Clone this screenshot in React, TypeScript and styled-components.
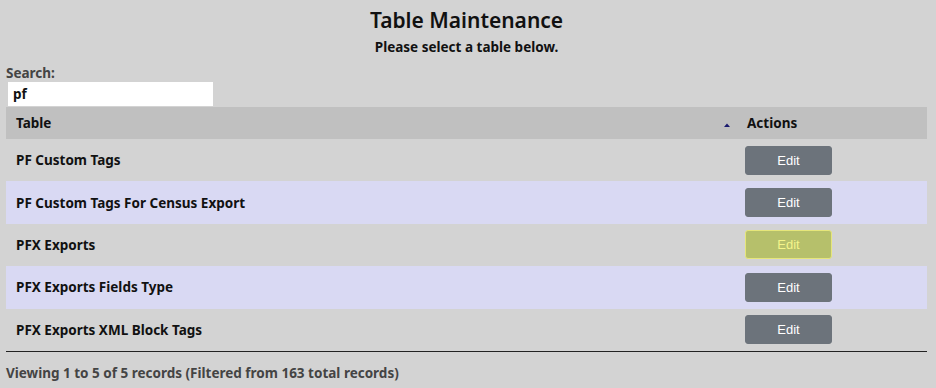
import React from "react";
import styled, { createGlobalStyle } from "styled-components";

const GlobalStyle = createGlobalStyle`
  body {
    margin: 0;
    background: #d3d3d3;
    font-family: "Noto Sans", "Open Sans", sans-serif;
    color: #111;
  }
`;

const Page = styled.div`
  padding: 6px 9px 0 6px;
`;

const Title = styled.h1`
  margin: 0;
  text-align: center;
  font-size: 21px;
  font-weight: 600;
  line-height: 28px;
`;

const Subtitle = styled.div`
  text-align: center;
  font-size: 13.5px;
  font-weight: 700;
  line-height: 16px;
  margin-top: 5px;
`;

const SearchLabel = styled.div`
  font-size: 13.5px;
  font-weight: 700;
  color: #444;
  margin-top: 9px;
  line-height: 18px;
`;

const SearchInput = styled.input`
  display: block;
  box-sizing: border-box;
  margin: 0 0 1px 2px;
  width: 205px;
  height: 24px;
  border: none;
  outline: none;
  background: #fff;
  padding: 0 5px;
  font-family: "Noto Sans", sans-serif;
  font-size: 13.5px;
  font-weight: 700;
  color: #111;
`;

const Table = styled.table`
  width: 100%;
  border-collapse: collapse;
  border-bottom: 1px solid #222;
`;

const HeadCell = styled.th<{ $w?: string }>`
  background: #c0c0c0;
  height: 32px;
  padding: 0 10px;
  text-align: left;
  font-size: 13.5px;
  font-weight: 700;
  width: ${(p) => p.$w || "auto"};
`;

const SortCell = styled(HeadCell)`
  width: 10px;
  padding: 0 6px 0 0;
  text-align: right;
`;

const Row = styled.tr<{ $alt?: boolean }>`
  background: ${(p) => (p.$alt ? "#d9d9f3" : "transparent")};
`;

const NameCell = styled.td`
  height: 42.4px;
  padding: 0 10px;
  font-size: 13.5px;
  font-weight: 700;
`;

const ActionCell = styled.td`
  padding: 0 8px;
`;

const EditButton = styled.button<{ $hover?: boolean }>`
  box-sizing: border-box;
  width: 87px;
  height: 29px;
  border-radius: 3px;
  border: 1px solid ${(p) => (p.$hover ? "#e6e67a" : "#6c737b")};
  background: ${(p) => (p.$hover ? "#b6c06b" : "#6c737b")};
  color: ${(p) => (p.$hover ? "#f4f48a" : "#fff")};
  font-family: "Liberation Sans", Arial, sans-serif;
  font-size: 13px;
  cursor: pointer;
`;

const Footer = styled.div`
  font-size: 13.5px;
  font-weight: 700;
  color: #444;
  margin-top: 12px;
`;

const rows = [
  "PF Custom Tags",
  "PF Custom Tags For Census Export",
  "PFX Exports",
  "PFX Exports Fields Type",
  "PFX Exports XML Block Tags",
];

const SortArrow = () => (
  <svg width="8" height="6" viewBox="0 0 8 6">
    <path d="M1 5 L4 1.5 L7 5 Z" fill="#1a1a6e" />
  </svg>
);

export default function App() {
  return (
    <Page>
      <GlobalStyle />
      <Title>Table Maintenance</Title>
      <Subtitle>Please select a table below.</Subtitle>
      <SearchLabel>Search:</SearchLabel>
      <SearchInput defaultValue="pf" />
      <Table>
        <thead>
          <tr>
            <HeadCell>Table</HeadCell>
            <SortCell>
              <SortArrow />
            </SortCell>
            <HeadCell $w="170px">Actions</HeadCell>
          </tr>
        </thead>
        <tbody>
          {rows.map((name, i) => (
            <Row key={name} $alt={i % 2 === 1}>
              <NameCell colSpan={2}>{name}</NameCell>
              <ActionCell>
                <EditButton $hover={i === 2}>Edit</EditButton>
              </ActionCell>
            </Row>
          ))}
        </tbody>
      </Table>
      <Footer>Viewing 1 to 5 of 5 records (Filtered from 163 total records)</Footer>
    </Page>
  );
}
